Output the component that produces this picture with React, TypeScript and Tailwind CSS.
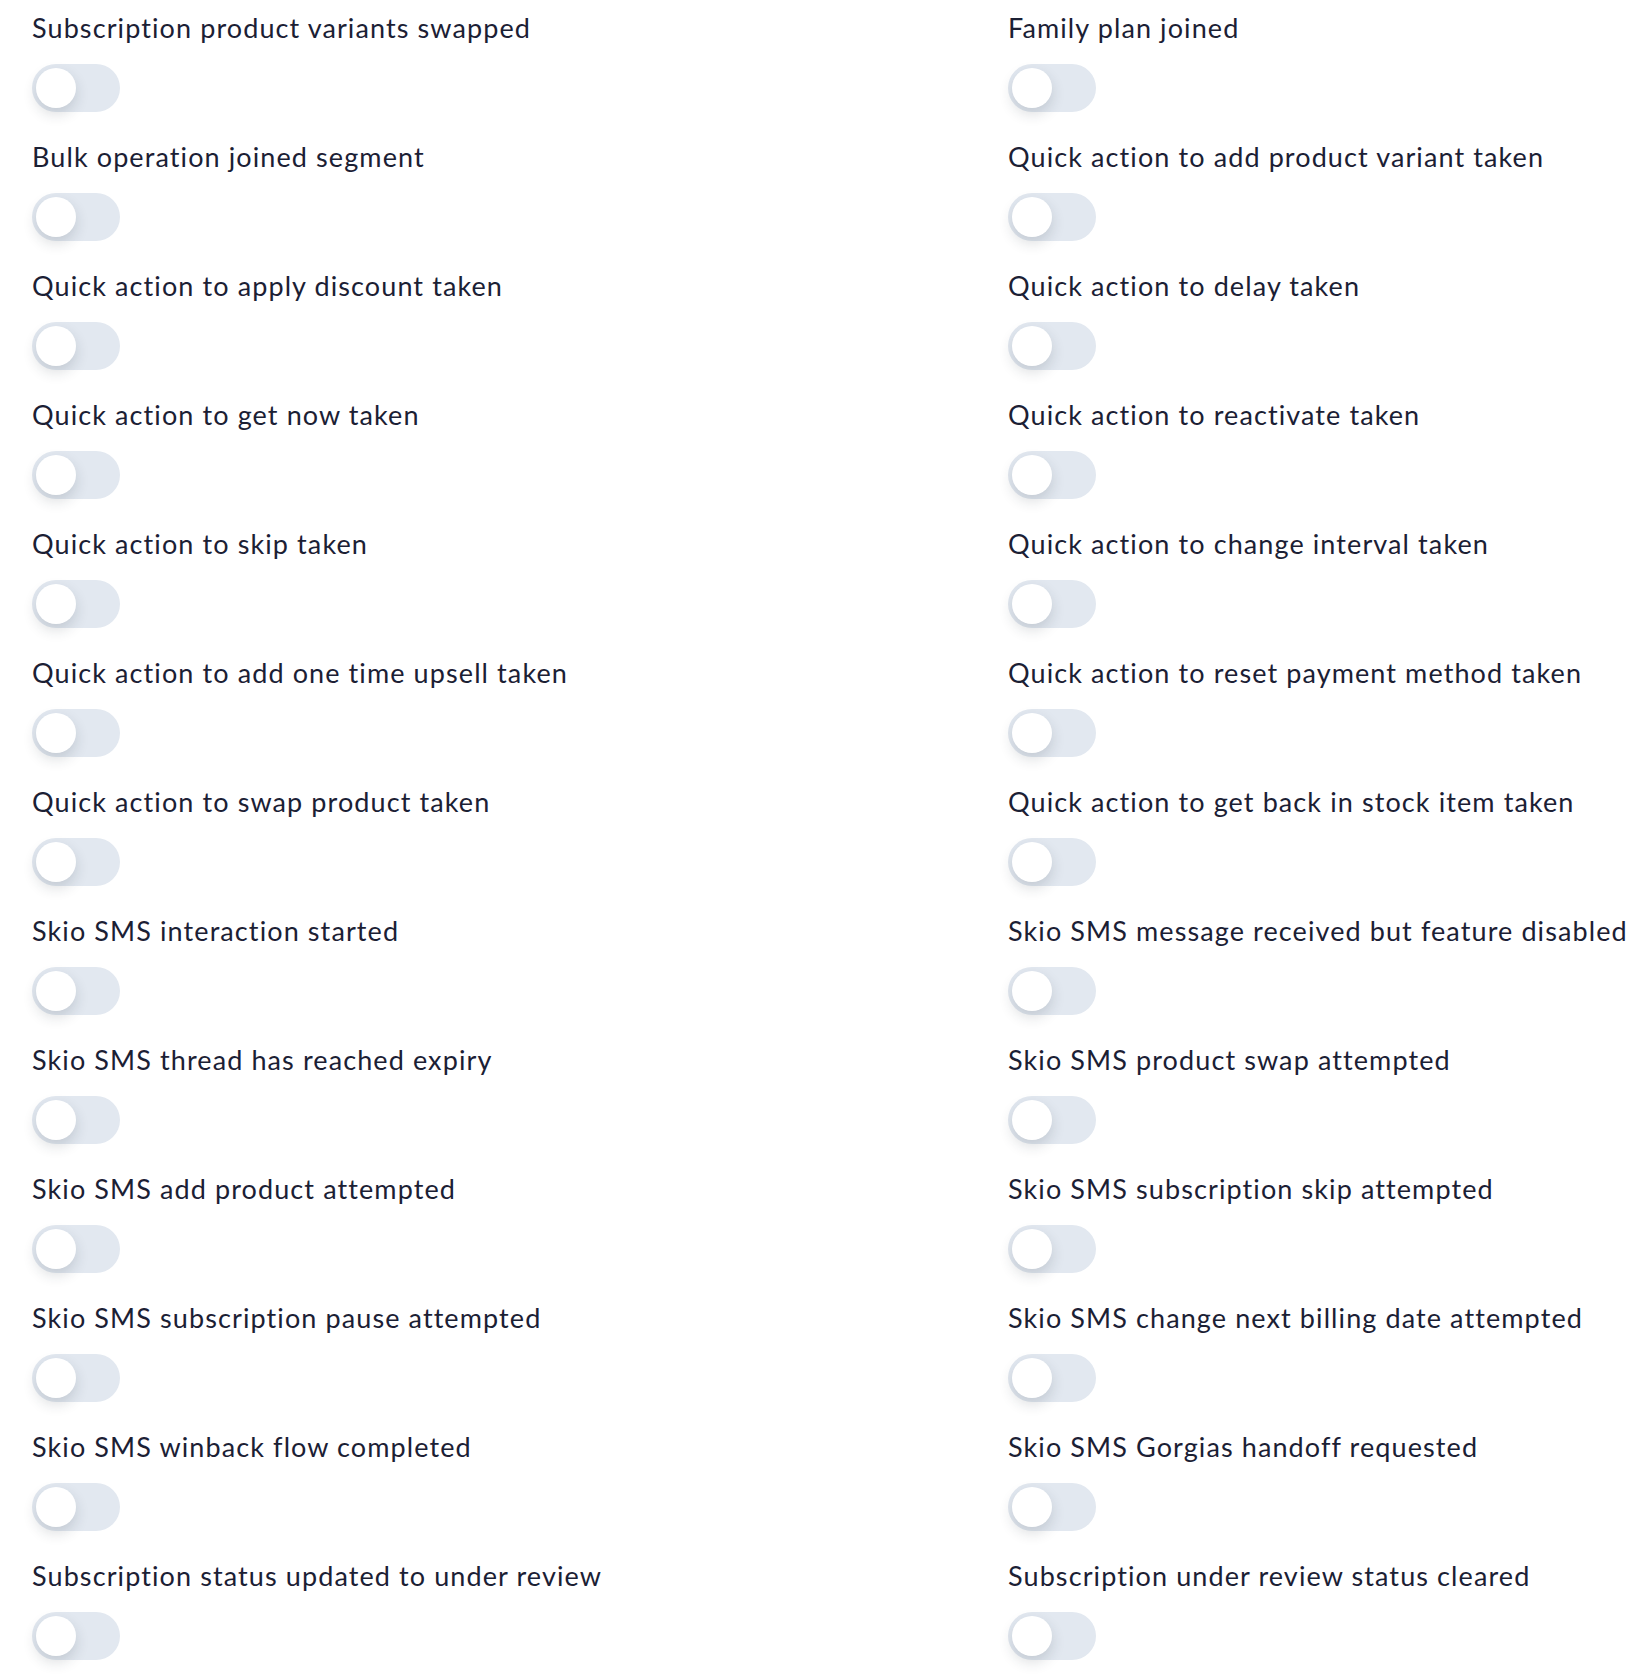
import React from "react";

const left = [
  "Subscription product variants swapped",
  "Bulk operation joined segment",
  "Quick action to apply discount taken",
  "Quick action to get now taken",
  "Quick action to skip taken",
  "Quick action to add one time upsell taken",
  "Quick action to swap product taken",
  "Skio SMS interaction started",
  "Skio SMS thread has reached expiry",
  "Skio SMS add product attempted",
  "Skio SMS subscription pause attempted",
  "Skio SMS winback flow completed",
  "Subscription status updated to under review",
];

const right = [
  "Family plan joined",
  "Quick action to add product variant taken",
  "Quick action to delay taken",
  "Quick action to reactivate taken",
  "Quick action to change interval taken",
  "Quick action to reset payment method taken",
  "Quick action to get back in stock item taken",
  "Skio SMS message received but feature disabled",
  "Skio SMS product swap attempted",
  "Skio SMS subscription skip attempted",
  "Skio SMS change next billing date attempted",
  "Skio SMS Gorgias handoff requested",
  "Subscription under review status cleared",
];

function Toggle() {
  return (
    <button
      type="button"
      role="switch"
      aria-checked={false}
      className="relative block h-12 w-[88px] rounded-full bg-[#e2e8f0] p-1"
    >
      <span className="block h-10 w-10 rounded-full bg-white shadow-[0_6px_14px_rgba(30,41,59,0.16)]" />
    </button>
  );
}

function Setting({ label }: { label: string }) {
  return (
    <div className="flex flex-col pb-[27px]">
      <span className="whitespace-nowrap text-[27px] font-normal leading-[36px] tracking-[1.1px] text-[#1b2034]">
        {label}
      </span>
      <div className="mt-[18px]">
        <Toggle />
      </div>
    </div>
  );
}

export default function App() {
  return (
    <div
      className="min-h-screen overflow-hidden bg-white pl-8 pt-[10px]"
      style={{ fontFamily: "Lato, 'Open Sans', sans-serif" }}
    >
      <div className="grid grid-cols-[976px_1fr]">
        {left.map((l, i) => (
          <React.Fragment key={i}>
            <Setting label={l} />
            <Setting label={right[i]} />
          </React.Fragment>
        ))}
      </div>
    </div>
  );
}
